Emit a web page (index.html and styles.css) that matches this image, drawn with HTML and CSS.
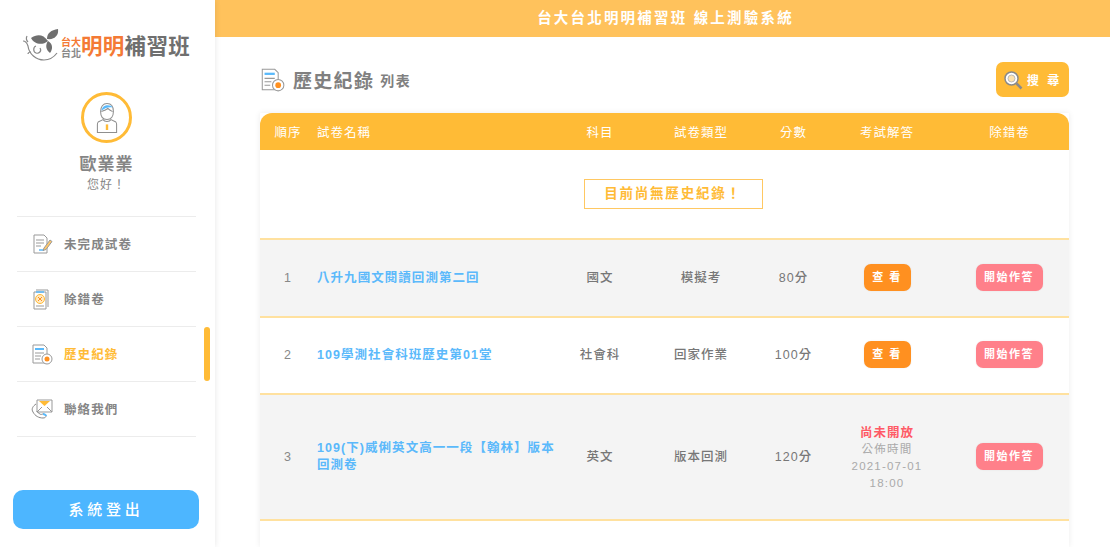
FILE: index.html
```html
<!DOCTYPE html>
<html lang="zh-Hant">
<head>
    <meta charset="UTF-8">
    <meta name="viewport" content="width=device-width, initial-scale=1.0">
    <title>線上測驗系統</title>
    <link rel="stylesheet" href="styles.css">
</head>
<body>
    <div class="app">
        <aside class="sidebar">
            <div class="logo">
                <svg class="logo-leaf" viewBox="0 0 40 34" width="40" height="34" fill="none">
                    <path d="M25 13C20 6 14 6 8 10c3 6 11 8 17 3z" fill="#6f6f6f"/>
                    <path d="M24 11c0-6 4-9 11-10 1 6-3 11-11 10z" fill="#6f6f6f"/>
                    <path d="M25 13c-3 4-2 9 2 12 3-4 3-9-2-12z" fill="#6f6f6f"/>
                    <path d="M0 13c3 0 4 2 5 5 1 8 8 14 16 14 6 0 10-3 13-7M4 8c-1 2-1 4 1 6M13 18c-3 1-3 6 0 7s6-2 4-5M8 24c-2 0-3 1-3 2" stroke="#888" stroke-width="1.200"/>
                </svg>
                <div class="logo-small"><span class="logo-orange">台大</span><span>台北</span></div>
                <div class="logo-big"><span class="logo-orange">明明</span>補習班</div>
            </div>

            <div class="profile">
                <div class="avatar">
                    <svg viewBox="0 0 30 40" width="24" height="34" fill="none" stroke="#8f8f8f" stroke-width="1.3">
                        <path d="M7 12c0-6 3-10 8-10s8 4 8 10-3 10-8 10-8-4-8-10z" fill="#fff"/>
                        <path d="M8 11c1-5 4-7 8-7 3 0 5 1 6 3-4-1-9 0-14 4z" fill="#59b9fb" stroke="none"/>
                        <path d="M8 12c3-1 6-2 8-4 2 2 4 3 6 4"/>
                        <path d="M10 22l-6 3c-1 1-1 2-1 3v10h24V28c0-1 0-2-1-3l-6-3c-2 3-8 3-10 0z" fill="#fff"/>
                        <path d="M15 28v7" stroke="#ffbb36" stroke-width="3"/>
                    </svg>
                </div>
                <div class="profile-name">歐業業</div>
                <div class="profile-hello">您好！</div>
            </div>

            <nav class="nav">
                <a class="nav-item">
                    <svg class="nav-icon" viewBox="0 0 22 22" fill="none" stroke="#999" stroke-width="1">
                        <path d="M3 2h10l3 3v15H3z"/>
                        <path d="M5 7h8M5 10h8M5 13h5"/>
                        <path d="M8 17h5" stroke="#59b9fb" stroke-width="1.5"/>
                        <path d="M13 15l6-8 2 1.500-6 8-3 1z" fill="#ffc76a" stroke="#999"/>
                    </svg>
                    未完成試卷
                </a>
                <a class="nav-item">
                    <svg class="nav-icon" viewBox="0 0 22 22" fill="none" stroke="#999" stroke-width="1">
                        <path d="M5 2h12v17"/>
                        <path d="M3 4h12v17H3z" fill="#fff"/>
                        <path d="M5 4h8" stroke="#59b9fb" stroke-width="1.500"/>
                        <circle cx="9" cy="11" r="4.500" stroke="#ffbb36" fill="#ffe9c2"/>
                        <path d="M7 9l4 4M11 9l-4 4" stroke="#ff9020"/>
                        <path d="M5 18h8"/>
                    </svg>
                    除錯卷
                </a>
                <a class="nav-item nav-item-active">
                    <svg class="nav-icon" viewBox="0 0 22 22" fill="none" stroke="#999" stroke-width="1">
                        <path d="M2 2h11l3 3v15H2z"/>
                        <path d="M4 6h9" stroke="#59b9fb" stroke-width="2"/>
                        <path d="M4 10h9M4 13h6M4 16h5"/>
                        <circle cx="16" cy="16" r="5" fill="#fff"/>
                        <circle cx="16" cy="16" r="2.500" fill="#ff9020" stroke="none"/>
                    </svg>
                    歷史紀錄
                </a>
                <a class="nav-item">
                    <svg class="nav-icon" viewBox="0 0 22 22" fill="none" stroke="#999" stroke-width="1">
                        <path d="M6 2h15v12H6z" fill="#fff"/>
                        <path d="M8 3h11l-5.500 5z" fill="#ffbb36" stroke="none"/>
                        <path d="M6 14l5-5M21 14l-5-5"/>
                        <path d="M5 6C2 8 0 11 2 14c2 4 6 6 10 6 2 0 3-1 3-2s-2-2-3-2-2 1-3 0c-1-.5-3-2-3-3" stroke="#888"/>
                        <path d="M12 16c1 0 3 1 3 2" stroke="#59b9fb" stroke-width="2"/>
                    </svg>
                    聯絡我們
                </a>
            </nav>

            <button class="logout" type="button">系統登出</button>
        </aside>

        <div class="main">
            <header class="topbar">台大台北明明補習班 線上測驗系統</header>

            <div class="content">
                <div class="page-head">
                    <svg class="page-icon" viewBox="0 0 22 22" fill="none" stroke="#999" stroke-width="0.9">
                        <path d="M2 2h11l3 3v15H2z"/>
                        <path d="M4 6h9" stroke="#59b9fb" stroke-width="2"/>
                        <path d="M4 10h9M4 13h6M4 16h5"/>
                        <circle cx="16" cy="16" r="5" fill="#fff"/>
                        <circle cx="16" cy="16" r="2.500" fill="#ff9020" stroke="none"/>
                    </svg>
                    <h1 class="page-title">歷史紀錄</h1>
                    <span class="page-sub">列表</span>
                    <button class="btn-search" type="button">
                        <svg viewBox="0 0 20 20" width="20" height="20" fill="none">
                            <circle cx="8.500" cy="8.500" r="6.500" fill="#fff" stroke="#8a8a8a" stroke-width="1.500"/>
                            <circle cx="8.500" cy="8.500" r="3.500" fill="#ffe3ad" stroke="#bbb"/>
                            <path d="M13.500 13.500l5 5" stroke="#8a8a8a" stroke-width="2.500"/>
                        </svg>
                        <span>搜 尋</span>
                    </button>
                </div>

                <table class="record-table">
                    <colgroup>
                        <col class="col-no">
                        <col class="col-name">
                        <col class="col-subject">
                        <col class="col-type">
                        <col class="col-score">
                        <col class="col-answer">
                        <col class="col-debug">
                    </colgroup>
                    <thead>
                        <tr>
                            <th>順序</th>
                            <th class="cell-name">試卷名稱</th>
                            <th>科目</th>
                            <th>試卷類型</th>
                            <th>分數</th>
                            <th>考試解答</th>
                            <th>除錯卷</th>
                        </tr>
                    </thead>
                    <tbody>
                        <tr class="row-empty">
                            <td colspan="7"><span class="empty-note">目前尚無歷史紀錄！</span></td>
                        </tr>
                        <tr class="row-grey row-a">
                            <td class="cell-no">1</td>
                            <td class="cell-name"><a class="exam-link">八升九國文閱讀回測第二回</a></td>
                            <td>國文</td>
                            <td>模擬考</td>
                            <td>80分</td>
                            <td><button class="btn btn-view" type="button">查 看</button></td>
                            <td><button class="btn btn-start" type="button">開始作答</button></td>
                        </tr>
                        <tr class="row-c">
                            <td class="cell-no">2</td>
                            <td class="cell-name"><a class="exam-link">109學測社會科班歷史第01堂</a></td>
                            <td>社會科</td>
                            <td>回家作業</td>
                            <td>100分</td>
                            <td><button class="btn btn-view" type="button">查 看</button></td>
                            <td><button class="btn btn-start" type="button">開始作答</button></td>
                        </tr>
                        <tr class="row-grey row-b">
                            <td class="cell-no">3</td>
                            <td class="cell-name"><a class="exam-link">109(下)威俐英文高一一段【翰林】版本回測卷</a></td>
                            <td>英文</td>
                            <td>版本回測</td>
                            <td>120分</td>
                            <td>
                                <div class="not-open">尚未開放</div>
                                <div class="publish">公佈時間<br>2021-07-01<br>18:00</div>
                            </td>
                            <td><button class="btn btn-start" type="button">開始作答</button></td>
                        </tr>
                        <tr class="row-tail">
                            <td colspan="7"></td>
                        </tr>
                    </tbody>
                </table>
            </div>
        </div>
    </div>
</body>
</html>
```

FILE: styles.css
```css
* {
    box-sizing: border-box;
}

html,
body {
    height: 100%;
    margin: 0;
    overflow: hidden;
}

body {
    font-family: "Liberation Sans", "Noto Sans CJK TC", sans-serif;
    color: #777;
    background: #fff;
}

.app {
    display: flex;
    height: 100vh;
}

/* sidebar */
.sidebar {
    display: flex;
    flex-direction: column;
    flex: 0 0 215px;
    padding: 0 16px 18px 13px;
    background: #fff;
    box-shadow: 0 0 6px rgba(0, 0, 0, 0.1);
    z-index: 1;
}

.logo {
    display: flex;
    align-items: center;
    height: 36px;
    margin: 27px 0 0 10px;
    white-space: nowrap;
}

.logo-leaf {
    flex: none;
    margin-right: -2px;
}

.logo-small {
    display: flex;
    flex-direction: column;
    margin-top: 5px;
    font-size: 10px;
    font-weight: 700;
    line-height: 11px;
    color: #888;
}

.logo-big {
    font-size: 21.500px;
    font-weight: 700;
    line-height: 24px;
    margin-top: 4px;
    color: #6f6f6f;
    letter-spacing: 0.300px;
}

.logo-orange {
    color: #f47a35;
}

.profile {
    display: flex;
    flex-direction: column;
    align-items: center;
    margin: 29px 0 0 1px;
}

.avatar {
    display: flex;
    align-items: center;
    justify-content: center;
    width: 51px;
    height: 51px;
    border: 3px solid #ffbb36;
    border-radius: 50%;
}

.profile-name {
    margin-top: 10px;
    font-size: 17px;
    font-weight: 700;
    line-height: 24px;
    letter-spacing: 1px;
    color: #858585;
}

.profile-hello {
    font-size: 12px;
    line-height: 16px;
    letter-spacing: 1px;
    color: #888;
}

.nav {
    margin: 23px 3px 0 4px;
    border-top: 1px solid #ececec;
}

.nav-item {
    position: relative;
    display: flex;
    align-items: center;
    gap: 11px;
    height: 55px;
    padding: 0 0 1px 14px;
    border-bottom: 1px solid #ececec;
    font-size: 12.500px;
    font-weight: 700;
    letter-spacing: 1.100px;
    color: #858585;
}

.nav-item-active {
    color: #ffbb36;
}

.nav-item-active::after {
    content: "";
    position: absolute;
    top: 0;
    right: -14px;
    width: 6px;
    height: 54px;
    border-radius: 3px;
    background: #ffbb36;
}

.nav-icon {
    flex: none;
    width: 22px;
    height: 22px;
}

.logout {
    margin-top: auto;
    height: 39px;
    padding: 0 0 2px;
    border: 0;
    border-radius: 10px;
    background: #4db6ff;
    font: inherit;
    font-size: 15px;
    font-weight: 500;
    letter-spacing: 3.700px;
    color: #fff;
}

/* main */
.main {
    flex: 1;
    min-width: 0;
}

.topbar {
    height: 37px;
    padding-left: 6px;
    background: #ffc25c;
    font-size: 14.500px;
    font-weight: 700;
    line-height: 36px;
    letter-spacing: 2.200px;
    text-align: center;
    color: #fff;
}

.content {
    padding: 25px 41px 0 45px;
}

.page-head {
    display: flex;
    align-items: center;
    height: 35px;
    margin-bottom: 16px;
}

.page-icon {
    width: 25px;
    height: 25px;
    margin-right: 8px;
}

.page-title {
    margin: 0 6px 0 0;
    font-size: 19px;
    font-weight: 700;
    letter-spacing: 1.300px;
    color: #808080;
}

.page-sub {
    font-size: 14px;
    font-weight: 700;
    letter-spacing: 1.500px;
    color: #808080;
}

.btn-search {
    display: flex;
    align-items: center;
    gap: 4px;
    height: 35px;
    width: 73px;
    margin-left: auto;
    padding: 0 0 0 7px;
    border: 0;
    border-radius: 7px;
    background: #ffbb36;
    font: inherit;
    font-size: 12px;
    font-weight: 700;
    letter-spacing: 2.500px;
    color: #fff;
    white-space: nowrap;
}

/* table */
.record-table {
    width: 809px;
    border-collapse: collapse;
    table-layout: fixed;
    box-shadow: 0 0 6px rgba(0, 0, 0, 0.08);
}

.col-no { width: 56px; }
.col-name { width: 245px; }
.col-subject { width: 78px; }
.col-type { width: 124px; }
.col-score { width: 61px; }
.col-answer { width: 126px; }
.col-debug { width: 119px; }

.record-table th {
    height: 37px;
    padding: 0;
    background: #ffbb36;
    font-size: 12.500px;
    font-weight: 400;
    letter-spacing: 1px;
    text-align: center;
    color: #fff;
}

.record-table th:first-child {
    border-top-left-radius: 12px;
}

.record-table th:last-child {
    border-top-right-radius: 12px;
}

.record-table td {
    padding: 0;
    border-bottom: 2px solid #ffe19f;
    font-size: 12.500px;
    line-height: 17px;
    letter-spacing: 1px;
    text-align: center;
    color: #777;
    font-weight: 500;
}

.record-table .cell-name {
    padding: 0 3px 0 1px;
    text-align: left;
}

.record-table .cell-no {
    font-weight: 400;
    color: #888;
}

.row-empty td {
    height: 89px;
}

.row-a td {
    height: 78px;
}

.row-c td {
    height: 77px;
}

.row-b td {
    height: 126px;
}

.record-table .row-tail td {
    height: 27px;
    border-bottom: 0;
}

.row-grey td {
    background: #f4f4f4;
}

.empty-note {
    display: inline-block;
    width: 179px;
    height: 30px;
    margin-left: 17px;
    border: 1px solid #ffc862;
    font-size: 13.500px;
    font-weight: 700;
    line-height: 28px;
    letter-spacing: 1.800px;
    color: #ffbb36;
}

.exam-link {
    display: block;
    font-size: 12.500px;
    font-weight: 700;
    line-height: 17px;
    letter-spacing: 1.050px;
    color: #5bb9fb;
}

.btn {
    height: 27px;
    padding: 0;
    margin-bottom: 2px;
    border: 0;
    border-radius: 7px;
    font: inherit;
    font-size: 11px;
    font-weight: 700;
    letter-spacing: 1.500px;
    color: #fff;
    box-shadow: 0 0 2px rgba(0, 0, 0, 0.08);
}

.btn-view {
    width: 47px;
    background: #ff9020;
}

.btn-start {
    width: 67px;
    margin-right: 1px;
    background: #ff808a;
}

.not-open {
    padding-top: 3px;
    font-size: 12.500px;
    font-weight: 700;
    line-height: 15px;
    letter-spacing: 1px;
    color: #ff5a66;
}

.publish {
    font-size: 11.500px;
    font-weight: 400;
    line-height: 17px;
    letter-spacing: 1.200px;
    color: #aaa;
}
```
